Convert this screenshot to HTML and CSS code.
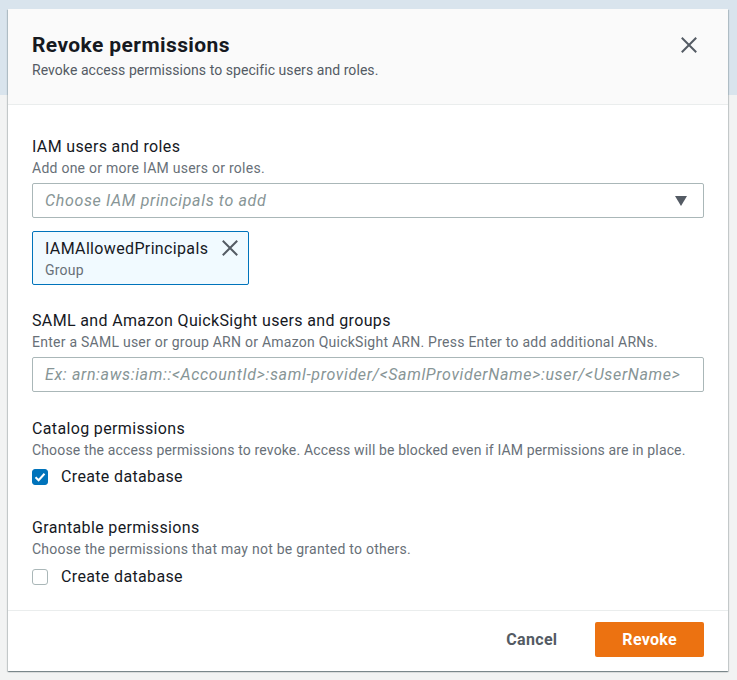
FILE: index.html
```html
<!DOCTYPE html>
<html lang="en">
<head>
<meta charset="utf-8">
<title>Revoke permissions</title>
<link rel="stylesheet" href="styles.css">
</head>
<body>
<div class="backdrop">
  <div class="modal">
    <div class="modal-header">
      <div class="header-text">
        <h2 class="title">Revoke permissions</h2>
        <p class="subtitle">Revoke access permissions to specific users and roles.</p>
      </div>
      <button class="close-btn" aria-label="Close">
        <svg width="16" height="16" viewBox="0 0 16 16"><path d="M1.5 1.5 L14.5 14.5 M14.5 1.5 L1.5 14.5" stroke="#545b64" stroke-width="2" fill="none" stroke-linecap="square"/></svg>
      </button>
    </div>
    <div class="modal-body">
      <div class="field">
        <div class="label">IAM users and roles</div>
        <div class="desc">Add one or more IAM users or roles.</div>
        <div class="select">
          <span class="placeholder">Choose IAM principals to add</span>
          <svg class="caret" width="12" height="10" viewBox="0 0 12 10"><path d="M0 0 H12 L6 10 Z" fill="#545b64"/></svg>
        </div>
        <div class="tag">
          <div class="tag-text">
            <div class="tag-name">IAMAllowedPrincipals</div>
            <div class="tag-sub">Group</div>
          </div>
          <svg class="tag-x" width="16" height="16" viewBox="0 0 16 16"><path d="M1.5 1.5 L14.5 14.5 M14.5 1.5 L1.5 14.5" stroke="#545b64" stroke-width="2" fill="none" stroke-linecap="square"/></svg>
        </div>
      </div>
      <div class="field field-saml">
        <div class="label">SAML and Amazon QuickSight users and groups</div>
        <div class="desc">Enter a SAML user or group ARN or Amazon QuickSight ARN. Press Enter to add additional ARNs.</div>
        <div class="input">
          <span class="placeholder">Ex: arn:aws:iam::&lt;AccountId&gt;:saml-provider/&lt;SamlProviderName&gt;:user/&lt;UserName&gt;</span>
        </div>
      </div>
      <div class="field field-check">
        <div class="label">Catalog permissions</div>
        <div class="desc desc-tight">Choose the access permissions to revoke. Access will be blocked even if IAM permissions are in place.</div>
        <label class="check-row">
          <span class="checkbox checked">
            <svg width="16" height="16" viewBox="0 0 16 16"><path d="M3.5 8.2 L6.6 11.2 L12.5 4.8" stroke="#fff" stroke-width="2" fill="none"/></svg>
          </span>
          <span class="check-label">Create database</span>
        </label>
      </div>
      <div class="field field-last">
        <div class="label">Grantable permissions</div>
        <div class="desc">Choose the permissions that may not be granted to others.</div>
        <label class="check-row">
          <span class="checkbox"></span>
          <span class="check-label">Create database</span>
        </label>
      </div>
    </div>
    <div class="modal-footer">
      <button class="btn-link">Cancel</button>
      <button class="btn-primary">Revoke</button>
    </div>
  </div>
</div>
</body>
</html>
```

FILE: styles.css
```css
* { box-sizing: border-box; }

html, body {
  margin: 0;
  padding: 0;
}

body {
  font-family: Roboto, "Liberation Sans", sans-serif;
  color: #16191f;
  background: linear-gradient(to bottom, #d9e4ed 0, #d9e4ed 95px, #f2f3f3 95px, #f2f3f3 100%);
  min-height: 680px;
}

.backdrop {
  padding: 9px 0 0 8px;
  height: 680px;
  overflow: hidden;
}

.modal {
  width: 720px;
  background: #ffffff;
  box-shadow: 0 1px 1px 0 rgba(0, 28, 36, 0.3), 1px 1px 1px 0 rgba(0, 28, 36, 0.15), -1px 1px 1px 0 rgba(0, 28, 36, 0.15);
}

.modal-header {
  display: flex;
  justify-content: space-between;
  align-items: flex-start;
  background: #fafafa;
  border-bottom: 1px solid #eaeded;
  padding: 22px 31px 24px 24px;
}

.title {
  margin: 0;
  font-size: 21px;
  line-height: 28px;
  font-weight: 700;
  letter-spacing: 0.4px;
  color: #16191f;
}

.subtitle {
  margin: 1px 0 0;
  font-size: 14px;
  line-height: 20px;
  letter-spacing: 0.06px;
  color: #545b64;
}

.close-btn {
  border: 0;
  background: none;
  padding: 0;
  margin-top: 6px;
  width: 16px;
  height: 16px;
  display: flex;
}

.modal-body {
  padding: 31px 24px 0;
}

.field {
  margin-bottom: 25px;
}

.field-saml {
  margin-bottom: 26px;
}

.field-check {
  margin-bottom: 29px;
}

.field-last {
  margin-bottom: 0;
  padding-bottom: 22px;
}

.label {
  font-size: 16px;
  line-height: 22px;
  letter-spacing: 0.35px;
  color: #16191f;
}

.desc {
  font-size: 14px;
  line-height: 20px;
  letter-spacing: 0.25px;
  color: #687078;
}

.desc-tight {
  letter-spacing: 0.15px;
}

.select, .input {
  margin-top: 5px;
  height: 35px;
  border: 1px solid #aab7b8;
  border-radius: 2px;
  display: flex;
  align-items: center;
  justify-content: space-between;
  padding: 0 16px 0 12px;
}

.placeholder {
  font-size: 16px;
  font-style: italic;
  letter-spacing: 0.65px;
  color: #879596;
  white-space: nowrap;
}

.caret {
  flex: none;
}

.tag {
  margin-top: 13px;
  display: inline-flex;
  align-items: flex-start;
  border: 1px solid #0073bb;
  border-radius: 2px;
  background: #f1faff;
  padding: 6px 10px 4px 12px;
}

.tag-name {
  font-size: 16px;
  line-height: 22px;
  letter-spacing: 0.35px;
  color: #16191f;
}

.tag-sub {
  font-size: 14px;
  line-height: 20px;
  letter-spacing: 0.22px;
  color: #687078;
}

.tag-x {
  margin: 2px 0 0 14px;
}

.check-row {
  display: flex;
  align-items: center;
  margin-top: 6px;
  height: 22px;
}

.field-last .check-row {
  margin-top: 7px;
}

.checkbox {
  width: 16px;
  height: 16px;
  border: 1px solid #aab7b8;
  border-radius: 3px;
  background: #fff;
  display: flex;
  flex: none;
}

.checkbox.checked {
  background: #0073bb;
  border-color: #0073bb;
}

.checkbox.checked svg {
  margin: -1px;
}

.check-label {
  margin-left: 13px;
  font-size: 16px;
  line-height: 22px;
  letter-spacing: 0.35px;
  color: #16191f;
}

.modal-footer {
  border-top: 1px solid #eaeded;
  display: flex;
  justify-content: flex-end;
  align-items: center;
  padding: 11px 24px 14px;
}

.btn-link {
  border: 0;
  background: none;
  font-family: Roboto, "Liberation Sans", sans-serif;
  font-size: 16px;
  font-weight: 700;
  letter-spacing: 0.3px;
  color: #545b64;
  padding: 0 20px;
  height: 35px;
  margin-right: 18px;
}

.btn-primary {
  border: 0;
  border-radius: 2px;
  background: #ec7211;
  color: #ffffff;
  font-family: Roboto, "Liberation Sans", sans-serif;
  font-size: 16px;
  font-weight: 700;
  letter-spacing: 0.3px;
  height: 35px;
  padding: 0 27px;
}
```
